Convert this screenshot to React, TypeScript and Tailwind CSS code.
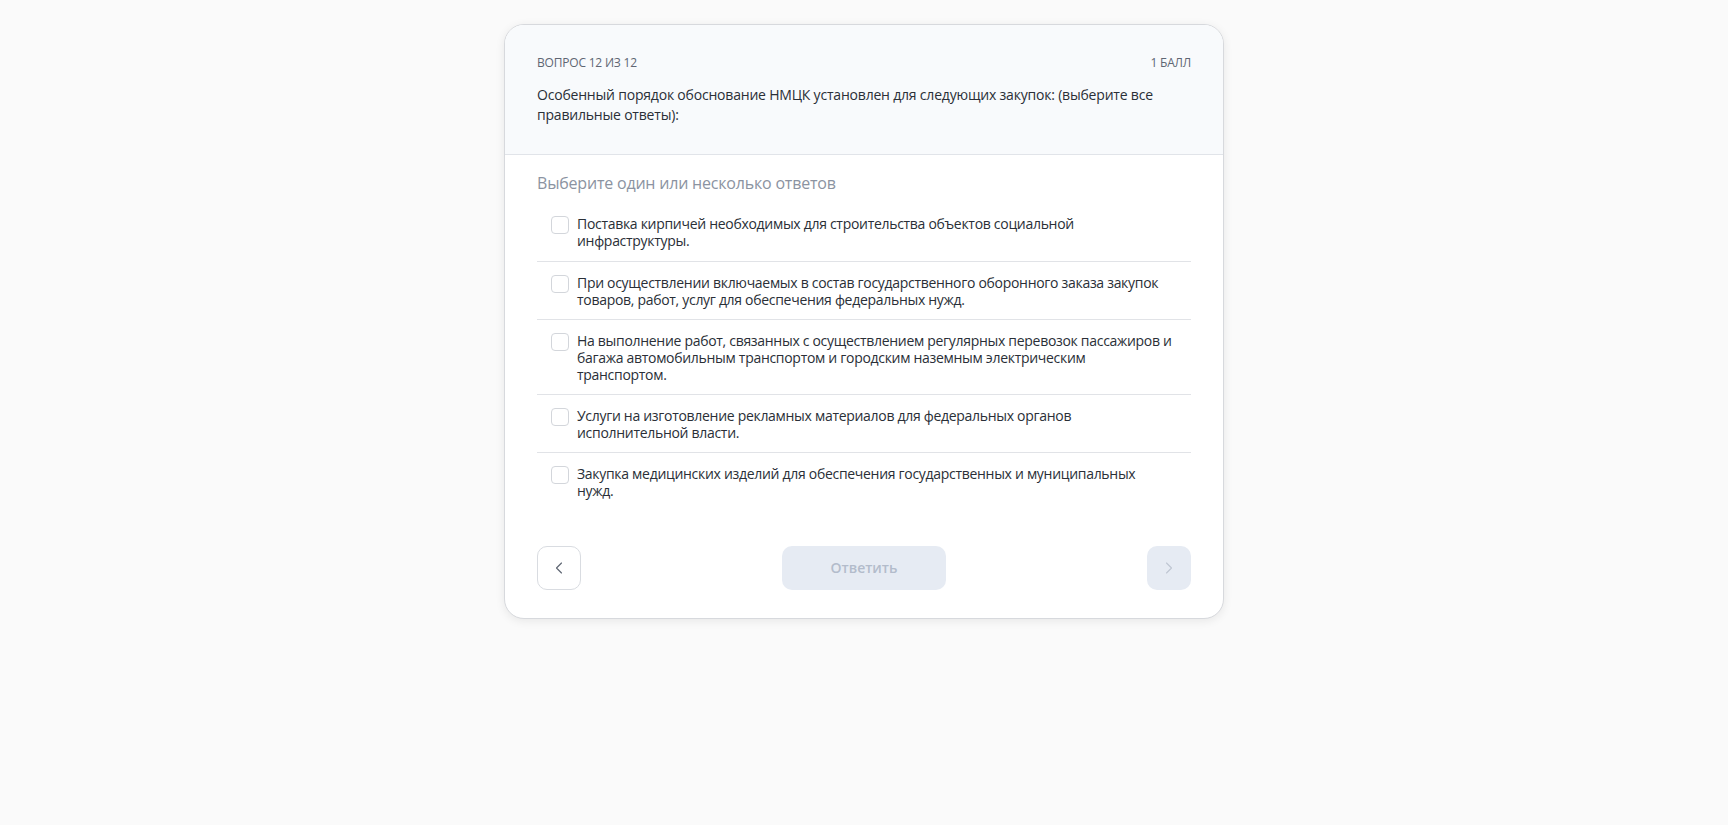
import { ChevronLeft, ChevronRight } from 'lucide-react'

const OPTIONS = [
  'Поставка кирпичей необходимых для строительства объектов социальной инфраструктуры.',
  'При осуществлении включаемых в состав государственного оборонного заказа закупок товаров, работ, услуг для обеспечения федеральных нужд.',
  'На выполнение работ, связанных с осуществлением регулярных перевозок пассажиров и багажа автомобильным транспортом и городским наземным электрическим транспортом.',
  'Услуги на изготовление рекламных материалов для федеральных органов исполнительной власти.',
  'Закупка медицинских изделий для обеспечения государственных и муниципальных нужд.',
]

export default function App() {
  return (
    <div
      className="min-h-screen bg-[#fafafa] flex justify-center pt-6"
      style={{ fontFamily: '"Open Sans", "Noto Sans", sans-serif' }}
    >
      <div className="w-[720px] self-start bg-white border border-[#d7d9dd] rounded-[20px] shadow-[0_2px_10px_rgba(0,0,0,0.08)] overflow-hidden">
        {/* Header */}
        <div className="bg-[#f8fafc] border-b border-[#e1e4e9] px-8 pt-7 pb-[29px]">
          <div className="flex justify-between text-xs leading-5 text-[#5f6673] uppercase tracking-[-0.2px]">
            <span>Вопрос 12 из 12</span>
            <span>1 балл</span>
          </div>
          <p className="mt-3 text-sm leading-5 text-[#2a2f37] tracking-[-0.2px]">
            Особенный порядок обоснование НМЦК установлен для следующих закупок: (выберите все
            правильные ответы):
          </p>
        </div>

        {/* Body */}
        <div className="px-8 pt-4 pb-7">
          <div className="text-base leading-6 text-[#8b93a1] tracking-[-0.2px]">
            Выберите один или несколько ответов
          </div>

          <div className="mt-2 flex flex-col">
            {OPTIONS.map((text, i) => (
              <label
                key={i}
                className={`flex items-start gap-2 pl-3.5 pr-4 pt-3 cursor-pointer ${
                  i === 0 ? 'pb-3' : 'pb-[11px] border-t border-[#e1e3e7]'
                }`}
              >
                <span className="mt-px w-[18px] h-[18px] shrink-0 rounded-[4px] border border-[#d3d6db] bg-white" />
                <span className="text-sm leading-[17px] text-[#2a2f37] tracking-[-0.3px]">{text}</span>
              </label>
            ))}
          </div>

          <div className="mt-9 flex items-center justify-between">
            <button className="w-11 h-11 rounded-[10px] border border-[#d9dce1] bg-white flex items-center justify-center text-[#5f6673]">
              <ChevronLeft size={20} strokeWidth={1.4} />
            </button>
            <button className="w-[164px] h-11 rounded-[10px] bg-[#e6ebf3] text-sm font-semibold text-[#b3bccb]">
              Ответить
            </button>
            <button className="w-11 h-11 rounded-[10px] bg-[#e6ebf3] flex items-center justify-center text-[#c0c7d3]">
              <ChevronRight size={20} strokeWidth={1.4} />
            </button>
          </div>
        </div>
      </div>
    </div>
  )
}
